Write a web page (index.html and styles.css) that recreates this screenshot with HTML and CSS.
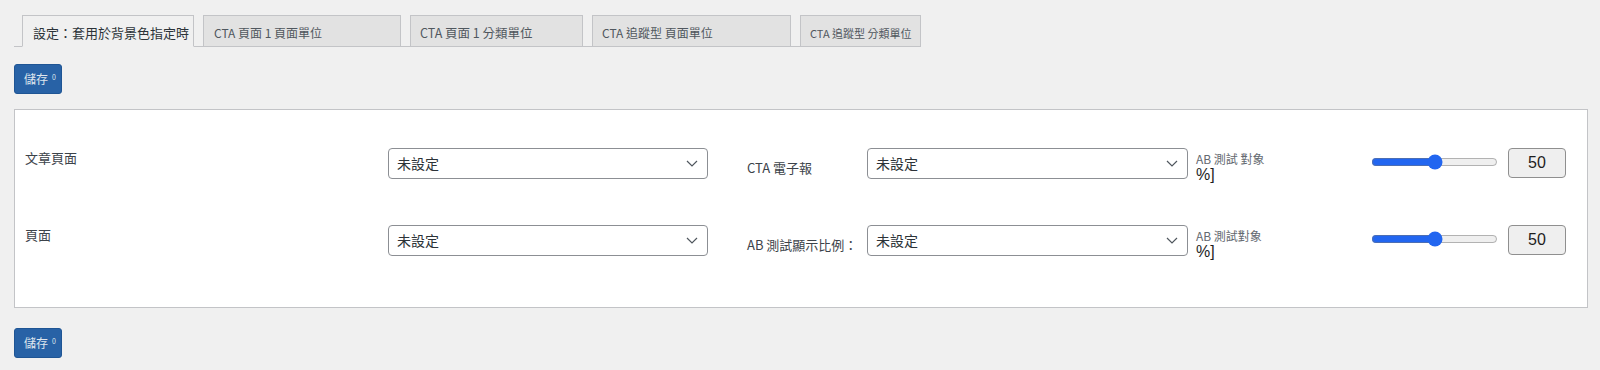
FILE: index.html
```html
<!DOCTYPE html>
<html>
<head>
<meta charset="utf-8"/>
<title>CTA 設定</title>
<meta name="viewport" content="width=device-width"/>
<link rel="stylesheet" href="styles.css">
</head>
<body>
<div class="g-wrap">
<!-- tabs -->
<div class="m-tabs">
    <a class="u-tab u-tab-1 z-active">設定：套用於背景色指定時</a>
    <a class="u-tab u-tab-2">CTA 頁面 1 頁面單位</a>
    <a class="u-tab u-tab-3">CTA 頁面 1 分類單位</a>
    <a class="u-tab u-tab-4">CTA 追蹤型 頁面單位</a>
    <a class="u-tab u-tab-5">CTA 追蹤型 分類單位</a>
</div>
<p class="u-act"><button class="u-btn" type="button">儲存<sup>0</sup></button></p>

<!-- settings -->
<div class="m-panel">
    <div class="m-row">
        <label class="u-lbl">文章頁面</label>
        <select class="u-sel"><option>未設定</option></select>
        <label class="u-lbl2">CTA 電子報</label>
        <select class="u-sel u-sel-2"><option>未設定</option></select>
        <p class="u-note">AB 測試 對象<b>%]</b></p>
        <input class="u-range" type="range" min="0" max="100" value="50">
        <span class="u-num">50</span>
    </div>
    <div class="m-row">
        <label class="u-lbl">頁面</label>
        <select class="u-sel"><option>未設定</option></select>
        <label class="u-lbl2">AB 測試顯示比例：</label>
        <select class="u-sel u-sel-2"><option>未設定</option></select>
        <p class="u-note">AB 測試對象<b>%]</b></p>
        <input class="u-range" type="range" min="0" max="100" value="50">
        <span class="u-num">50</span>
    </div>
</div>
<p class="u-act u-act-b"><button class="u-btn" type="button">儲存<sup>0</sup></button></p>
</div>
</body>
</html>
```

FILE: styles.css
```css
/* reset */
html,body,div,p,select,input,button,label{margin:0;padding:0;}
body{background-color:#f0f0f0;color:#3c434a;font:13px/20px "Noto Sans CJK TC","Noto Sans",sans-serif;}

.g-wrap{padding:15px 12px 0 14px;}

/* tabs */
.m-tabs{display:inline-flex;align-items:flex-end;gap:9px;padding-left:8px;border-bottom:1px solid #c3c4c7;}
.u-tab{display:block;box-sizing:border-box;height:32px;margin-bottom:-1px;padding:7px 9px 0;border:1px solid #c3c4c7;background-color:#e2e2e2;color:#50575e;font-size:12px;line-height:20px;white-space:nowrap;cursor:pointer;}
.u-tab.z-active{background-color:#f0f0f0;border-bottom-color:#f0f0f0;color:#2c3338;font-size:13px;padding-left:10px;}
.u-tab-1{width:172px;}
.u-tab-2{width:198px;padding-left:10px;}
.u-tab-3{width:173px;font-size:12.5px;}
.u-tab-4{width:199px;font-size:12px;}
.u-tab-5{width:121px;font-size:11px;}

/* buttons */
.u-act{margin-top:17px;height:30px;}
.u-act-b{margin-top:20px;}
.u-btn{box-sizing:border-box;width:48px;height:30px;padding:0 0 0 9px;text-align:left;background-color:#2862a6;border:1px solid #1f5594;border-radius:3px;color:#dfe6ee;font:12px/28px "Noto Sans CJK TC",sans-serif;cursor:pointer;}
.u-btn sup{font-size:7px;vertical-align:top;line-height:24px;margin-left:4px;}

/* panel */
.m-panel{margin-top:15px;background-color:#fff;border:1px solid #c3c4c7;padding:38px 0 51px 10px;display:flex;flex-direction:column;gap:46px;}
.m-row{display:flex;align-items:flex-start;height:31px;}
.u-lbl{width:363px;flex:none;color:#3c434a;}
.u-lbl2{width:120px;flex:none;margin:10px 0 0 39px;color:#3c434a;}
.u-sel{flex:none;box-sizing:border-box;width:320px;height:31px;padding:0 24px 0 8px;border:1px solid #8c8f94;border-radius:4px;background:#fff url("data:image/svg+xml,%3Csvg xmlns='http://www.w3.org/2000/svg' width='12' height='7' viewBox='0 0 12 7'%3E%3Cpath d='M1 1l5 5 5-5' fill='none' stroke='%2350575e' stroke-width='1.2'/%3E%3C/svg%3E") no-repeat right 9px center;color:#2c3338;font:14px/29px "Noto Sans CJK TC",sans-serif;appearance:none;-webkit-appearance:none;outline:0;}
.u-sel-2{width:321px;}
.u-note{width:175px;flex:none;margin:4px 0 0 8px;color:#646970;font-size:12px;line-height:14px;}
.u-note b{display:block;margin-top:1px;font:normal 16px/16px "Liberation Sans",Arial,sans-serif;color:#1e1e1e;}
.u-range{flex:none;width:127px;height:16px;margin:6px 0 0;accent-color:#2266f0;}
.u-num{flex:none;box-sizing:border-box;width:58px;height:30px;margin-left:10px;border:1px solid #8f8f8f;border-radius:4px;background-color:#efefef;text-align:center;color:#1e1e1e;font:16px/28px "Liberation Sans",Arial,sans-serif;}
```
